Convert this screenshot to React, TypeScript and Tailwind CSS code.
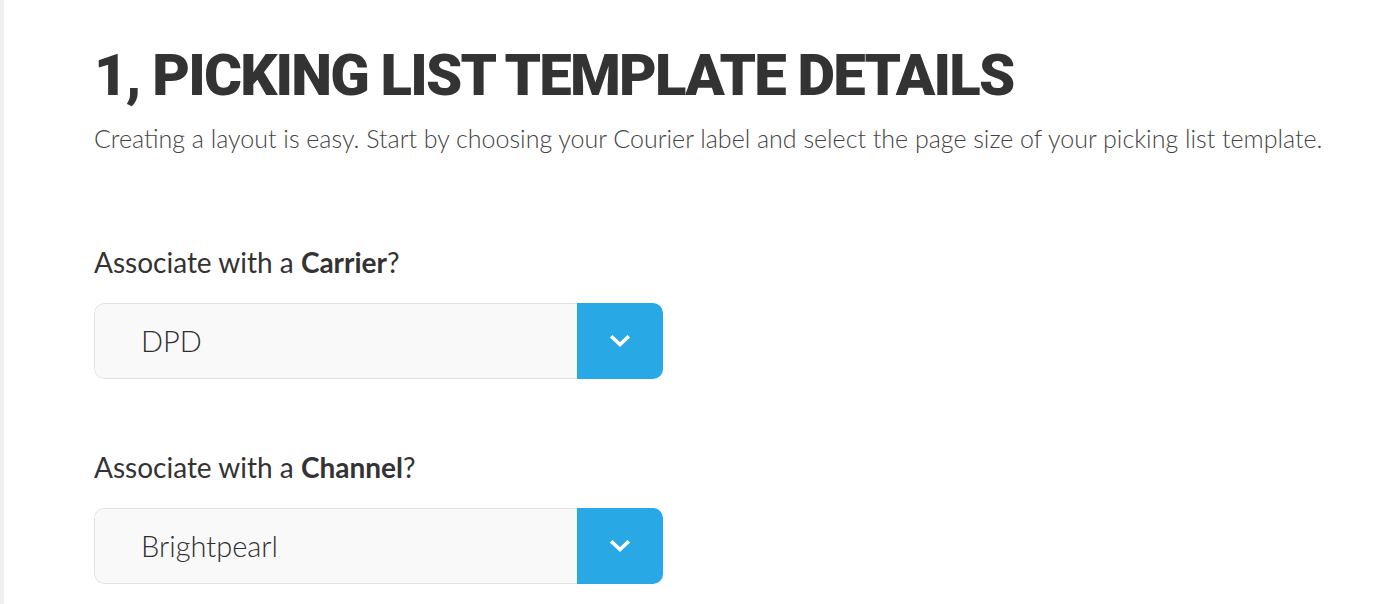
const FONT = "font-['Lato','Open_Sans',sans-serif]";

type SelectFieldProps = {
  label: string;
  emphasis: string;
  value: string;
};

function ChevronDown() {
  return (
    <svg width="22" height="15" viewBox="0 0 22 15" fill="none" aria-hidden="true">
      <path d="M3.5 3.5 L11 10.5 L18.5 3.5" stroke="white" strokeWidth="3.6" strokeLinecap="square" />
    </svg>
  );
}

function SelectField({ label, emphasis, value }: SelectFieldProps) {
  return (
    <div className="flex flex-col">
      {/* Question label */}
      <label className="text-[28px] leading-[34px] text-[#333]">
        {label} <span className="font-bold">{emphasis}</span>?
      </label>

      {/* Select — value area + blue toggle */}
      <div className="mt-[24px] flex h-[76px] w-[569px] overflow-hidden rounded-[10px]">
        <div className="flex flex-1 items-center rounded-l-[10px] border border-r-0 border-[#e2e2e2] bg-[#f9f9f9] pl-[46px] text-[29px] font-light text-[#2f2f2f]">
          {value}
        </div>
        <button className="flex w-[86px] items-center justify-center bg-[#29a8e6]">
          <ChevronDown />
        </button>
      </div>
    </div>
  );
}

export default function App() {
  return (
    <div className={`${FONT} flex min-h-[604px] w-full bg-white`}>
      <div className="w-[4px] shrink-0 bg-[#efefef]" />
      <main className="flex flex-col pl-[90px] pt-[42px]">
        <h1 className="font-['Roboto','Lato',sans-serif] text-[58px] font-black uppercase leading-[66px] tracking-[-1.8px] text-[#333]">
          1, Picking List Template Details
        </h1>
        <p className="mt-[14px] text-[25px] font-light leading-[32px] text-[#444]">
          Creating a layout is easy. Start by choosing your Courier label and select the page size of your picking list template.
        </p>

        <div className="mt-[91px] flex flex-col gap-[71px]">
          <SelectField label="Associate with a" emphasis="Carrier" value="DPD" />
          <SelectField label="Associate with a" emphasis="Channel" value="Brightpearl" />
        </div>
      </main>
    </div>
  );
}
